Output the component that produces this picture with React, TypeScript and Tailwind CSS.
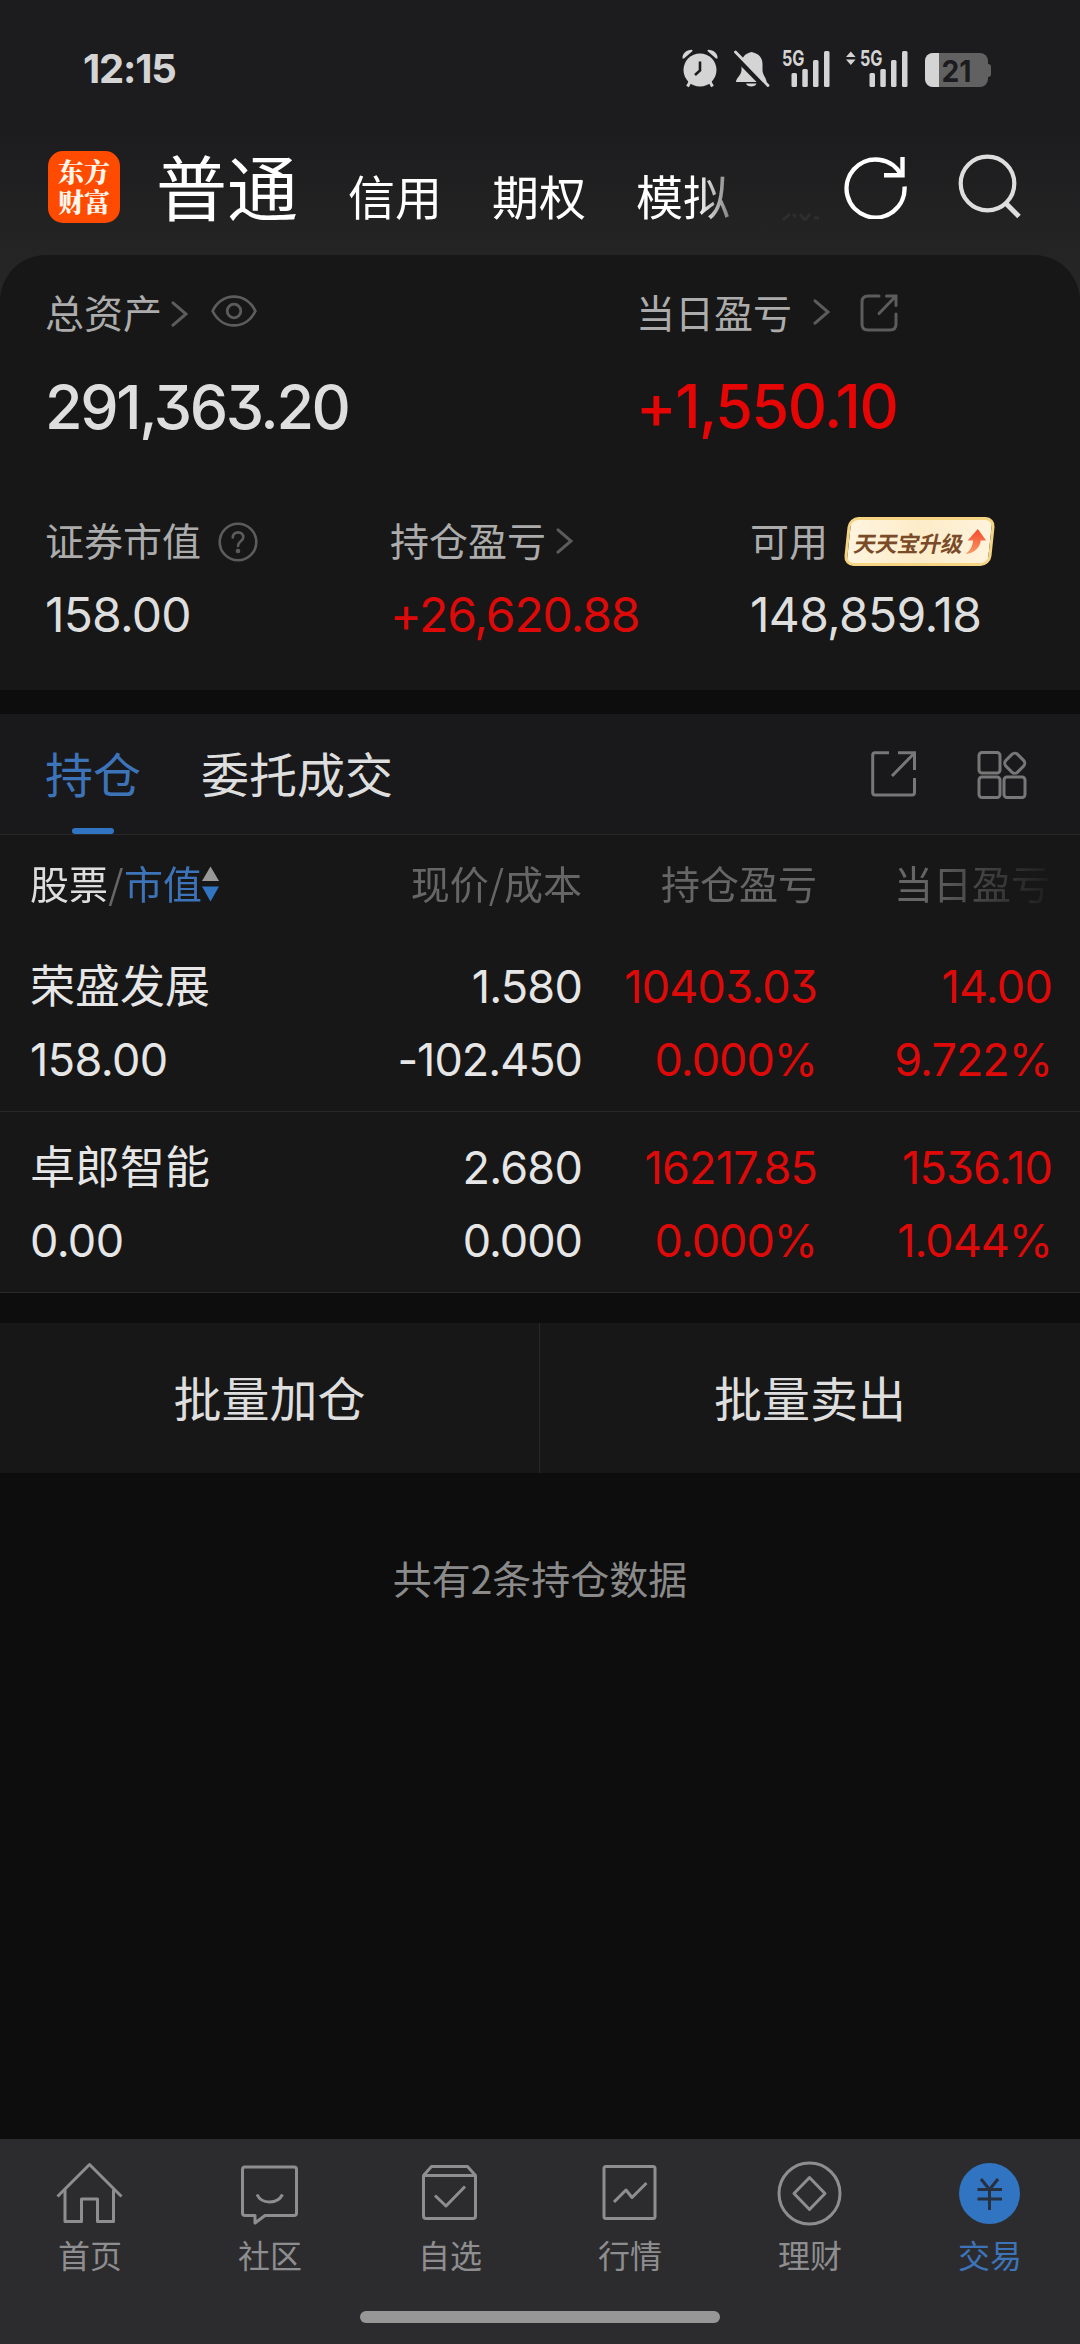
import type { ReactNode } from 'react';
import clsx from 'clsx';

interface Cell {
  top: string;
  bottom: string;
}

interface Holding {
  name: string;
  marketValue: string;
  price: Cell;
  profit: Cell;
  today: Cell;
}

const HOLDINGS: Holding[] = [
  {
    name: '荣盛发展',
    marketValue: '158.00',
    price: { top: '1.580', bottom: '-102.450' },
    profit: { top: '10403.03', bottom: '0.000%' },
    today: { top: '14.00', bottom: '9.722%' },
  },
  {
    name: '卓郎智能',
    marketValue: '0.00',
    price: { top: '2.680', bottom: '0.000' },
    profit: { top: '16217.85', bottom: '0.000%' },
    today: { top: '1536.10', bottom: '1.044%' },
  },
];

const NUM = "font-['Inter',sans-serif] [font-feature-settings:'cv09']";

/* ---------- Icons ---------- */

function AlarmIcon() {
  return (
    <svg width="38" height="40" viewBox="0 0 38 40" fill="none">
      <path d="M1.5 9.5C1 5 5 .8 11 .8L11.6 2 3 9.6Z" fill="#d4d4d4" />
      <path d="M36.500 9.500C37 5 33 .8 27 .8L26.400 2 35 9.600Z" fill="#d4d4d4" />
      <path d="M9 33 6.500 37.500M29 33 31.500 37.500" stroke="#d4d4d4" strokeWidth="3" />
      <circle cx="19" cy="21" r="16.500" fill="#d4d4d4" />
      <path d="M19 12.500V21.500L14 26" stroke="#1c1c1e" strokeWidth="2.600" />
    </svg>
  );
}

function BellOffIcon() {
  return (
    <svg width="37" height="37" viewBox="0 0 37 37" fill="none">
      <path
        d="M18.500 2C11.500 3.500 8.500 8 8.500 14V20C8.500 25 3 28 3 32H33.500C33.500 28 29.500 25 29.500 20V14C29.500 8 26 3.500 18.500 2Z"
        fill="#d4d4d4"
      />
      <path d="M13 33.500H23.500C22.500 37.500 14 37.500 13 33.500Z" fill="#d4d4d4" />
      <path d="M-1 3.500 33 38" stroke="#1c1c1e" strokeWidth="5" />
      <path d="M2.500 2 35 35.500" stroke="#d4d4d4" strokeWidth="2.800" strokeLinecap="round" />
    </svg>
  );
}

function SignalIcon({ traffic = false }: { traffic?: boolean }) {
  return (
    <svg className="overflow-visible" width={traffic ? 62 : 48} height="40" viewBox={traffic ? '-14 0 62 40' : '0 0 48 40'}>
      {traffic && <path d="M-14 8 -9.200 2.500-4.400 8ZM-14 10.500H-4.400L-9.200 16Z" fill="#d4d4d4" />}
      <text x="0" y="17" textLength="22.500" lengthAdjust="spacingAndGlyphs" fontFamily="Inter" fontSize="21.500" fontWeight="700" fill="#d4d4d4">
        5G
      </text>
      <rect x="9.500" y="24" width="5.500" height="14" rx="1.500" fill="#d4d4d4" />
      <rect x="20.300" y="20" width="5.500" height="18" rx="1.500" fill="#d4d4d4" />
      <rect x="31" y="11" width="5.500" height="27" rx="1.500" fill="#d4d4d4" />
      <rect x="42" y="2" width="5.500" height="36" rx="1.500" fill="#d4d4d4" />
    </svg>
  );
}

function BatteryIcon() {
  return (
    <svg width="66" height="34" viewBox="0 0 66 34">
      <rect x="0" y="0" width="63" height="34" rx="8" fill="#616161" />
      <rect x="60" y="11" width="6" height="13" rx="3" fill="#616161" />
      <path d="M8 0H14V34H8A8 8 0 0 1 0 26V8A8 8 0 0 1 8 0Z" fill="#d4d4d4" />
      <text x="16.500" y="28.500" textLength="30" lengthAdjust="spacingAndGlyphs" fontFamily="Inter" fontSize="30" fontWeight="700" fill="#1c1c1e">
        21
      </text>
    </svg>
  );
}

function RefreshIcon() {
  return (
    <svg width="64" height="64" viewBox="0 0 64 64" fill="none" stroke="#fff" strokeWidth="4.400">
      <path d="M60.500 31.500A29 29 0 1 1 57.500 20.500" />
      <path d="M58.500 2V20.300H40" />
    </svg>
  );
}

function SearchIcon() {
  return (
    <svg width="64" height="66" viewBox="0 0 64 66" fill="none" stroke="#dedede" strokeWidth="4.200">
      <circle cx="29.500" cy="29.500" r="26.800" />
      <path d="M47.500 49 61 62.500" strokeWidth="5" />
    </svg>
  );
}

function Chevron({ className }: { className?: string }) {
  return (
    <svg className={className} width="17" height="26" viewBox="0 0 17 26" fill="none" stroke="#5c5c5c" strokeWidth="3" strokeLinecap="round">
      <path d="M2 1.800 15 13 2 24.200" />
    </svg>
  );
}

function EyeIcon() {
  return (
    <svg className="ml-[23px]" width="46" height="32" viewBox="0 0 46 32" fill="none" stroke="#5c5c5c" strokeWidth="2.800">
      <path d="M1.600 16C6 7 14 1.600 23 1.600S40 7 44.400 16C40 25 32 30.400 23 30.400S6 25 1.600 16Z" />
      <circle cx="23" cy="16" r="6.800" />
    </svg>
  );
}

function HelpIcon() {
  return (
    <svg className="mt-[5px] ml-[17px]" width="40" height="40" viewBox="0 0 40 40" fill="none" stroke="#5c5c5c" strokeWidth="2.600">
      <circle cx="20" cy="20" r="18.300" />
      <path d="M14.800 15.500C15 8.500 25.300 8.800 25.300 15.200C25.300 19 20 19 20 24" strokeLinecap="round" />
      <circle cx="20" cy="29" r="1" fill="#5c5c5c" />
    </svg>
  );
}

function ShareRoundIcon() {
  return (
    <svg className="mt-[3px] ml-[29px]" width="40" height="40" viewBox="0 0 40 40" fill="none" stroke="#5c5c5c" strokeWidth="3" strokeLinecap="round">
      <path d="M20 3H9Q3 3 3 9V31Q3 37 9 37H31Q37 37 37 31V21" />
      <path d="M27.500 3H37V12.500M36.500 3.500 20 20.500" />
    </svg>
  );
}

function ShareSquareIcon() {
  return (
    <svg width="48" height="48" viewBox="0 0 48 48" fill="none" stroke="#777" strokeWidth="3">
      <path d="M19 2.700H5Q2.700 2.700 2.700 5V42.500Q2.700 45 5 45H42Q44.500 45 44.500 42.500V28" />
      <path d="M28 2.700H44.500V20M44 3.500 22 26" />
    </svg>
  );
}

function GridIcon() {
  return (
    <svg width="50" height="50" viewBox="0 0 50 50" fill="none" stroke="#777" strokeWidth="3">
      <rect x="2" y="2.500" width="21" height="20.500" rx="3" />
      <rect x="2" y="27" width="21" height="20.500" rx="3" />
      <rect x="27" y="27" width="21" height="20.500" rx="3" />
      <rect x="29.500" y="5" width="16.500" height="16.500" rx="4" transform="rotate(45 37.750 13.250)" />
    </svg>
  );
}

function SortIcon() {
  return (
    <svg className="mt-[4px]" width="17" height="36" viewBox="0 0 17 36">
      <path d="M0 15 8.500 .5 17 15Z" fill="#999" />
      <path d="M0 20.500H17L8.500 35.500Z" fill="#3174c1" />
    </svg>
  );
}

function UpgradeBadge() {
  return (
    <div className="mt-[5px] ml-[18px] flex h-[49px] w-[147px] -skew-x-6 items-center rounded-[10px] border-[3px] border-[#f5d484] bg-linear-to-r from-[#fff4df] via-[#fdecc8] to-[#fff3dc] pl-[6px]">
      <span className="-skew-x-6 text-[22px] leading-none font-bold tracking-[-0.3px] whitespace-nowrap text-[#7a4b28]">天天宝升级</span>
      <svg className="ml-[3px]" width="19" height="25" viewBox="0 0 19 25">
        <defs>
          <linearGradient id="rise" x1="0" y1="0" x2="0" y2="1">
            <stop offset="0" stopColor="#f5482f" />
            <stop offset="1" stopColor="#f79a62" />
          </linearGradient>
        </defs>
        <path d="M9.500 0 19 11.500H13.500C14 18 9 24 0 25C4.500 21 6 17 6 11.500H.5Z" fill="url(#rise)" />
      </svg>
    </div>
  );
}

/* ---------- Header ---------- */

function StatusBar() {
  return (
    <div className="flex h-[137px] items-center pl-[83px]">
      <span className={clsx(NUM, 'w-[598px] text-[40px] font-bold tracking-[-1.2px] text-[#d4d4d4]')}>12:15</span>
      <div className="flex items-center">
        <AlarmIcon />
        <div className="ml-[14px]">
          <BellOffIcon />
        </div>
        <div className="ml-[12px]">
          <SignalIcon />
        </div>
        <div className="ml-[16px]">
          <SignalIcon traffic />
        </div>
        <div className="mt-[3px] ml-[17px]">
          <BatteryIcon />
        </div>
      </div>
    </div>
  );
}

function AccountTabs() {
  return (
    <div className="flex h-[118px] items-start pl-[48px]">
      <div className="mt-[14px] h-[72px] w-[72px] rounded-[15px] bg-[#ff4b00] pt-[5px] text-center font-['Noto_Serif_CJK_SC','Noto_Sans_CJK_SC',sans-serif] text-[26px] leading-[30px] font-black text-[#fff6ec]">
        东方
        <br />
        财富
      </div>
      <div className="-mt-[8px] ml-[36px] flex h-[120px] w-[586px] items-baseline overflow-hidden whitespace-nowrap text-white [mask-image:linear-gradient(to_right,#000_540px,transparent_600px)]">
        <span className="mt-[17px] text-[71px] leading-[76px]">普通</span>
        <span className="ml-[50px] text-[47px]">信用</span>
        <span className="ml-[50px] text-[47px]">期权</span>
        <span className="ml-[50px] text-[47px]">模拟</span>
      </div>
      <svg className="mt-[76px] ml-[40px]" width="38" height="8" viewBox="0 0 38 8" fill="none" stroke="#2e2e2e" strokeWidth="3">
        <path d="M1 7 8 1M11 1 14 4M18 1 23 7 28 1M32 5H37" />
      </svg>
      <div className="mt-[18px] ml-[24px]">
        <RefreshIcon />
      </div>
      <div className="mt-[17px] ml-[50px]">
        <SearchIcon />
      </div>
    </div>
  );
}

/* ---------- Assets ---------- */

function Label({ text, children }: { text: string; children?: ReactNode }) {
  return (
    <div className="flex h-[60px] items-center">
      <span className="text-[39px] leading-[60px] whitespace-nowrap text-[#acacac]">{text}</span>
      {children}
    </div>
  );
}

function AssetCard() {
  return (
    <section className="h-[435px] rounded-t-[46px] bg-[#171717] pt-[26px] pl-[45px]">
      <div className="grid grid-cols-[591px_1fr]">
        <Label text="总资产">
          <Chevron className="mt-[6px] ml-[9px]" />
          <EyeIcon />
        </Label>
        <Label text="当日盈亏">
          <Chevron className="mt-[2px] ml-[21px]" />
          <ShareRoundIcon />
        </Label>
        <p className={clsx(NUM, 'mt-[36px] text-[61px] leading-[60px] font-medium tracking-[-2.4px] text-[#dedede]')}>291,363.20</p>
        <p className={clsx(NUM, 'mt-[35px] text-[61px] leading-[60px] font-medium tracking-[-1.5px] text-[#e60505]')}>+1,550.10</p>
      </div>
      <div className="mt-[72px] grid grid-cols-[345px_360px_1fr]">
        <Label text="证券市值">
          <HelpIcon />
        </Label>
        <Label text="持仓盈亏">
          <Chevron className="mt-[4px] ml-[10px]" />
        </Label>
        <Label text="可用">
          <UpgradeBadge />
        </Label>
        <p className={clsx(NUM, 'mt-[16px] text-[48px] leading-[60px] tracking-[-0.8px] text-[#dedede]')}>158.00</p>
        <p className={clsx(NUM, 'mt-[16px] text-[48px] leading-[60px] tracking-[-1.1px] text-[#de0a0a]')}>+26,620.88</p>
        <p className={clsx(NUM, 'mt-[16px] text-[48px] leading-[60px] tracking-[-0.7px] text-[#dedede]')}>148,859.18</p>
      </div>
    </section>
  );
}

/* ---------- Holdings ---------- */

function HoldingTabs() {
  return (
    <div className="flex h-[121px] border-b border-[#282828] bg-[#19191b] pl-[45px]">
      <div className="flex flex-col items-center">
        <span className="mt-[28px] h-[60px] text-[48px] leading-[60px] text-[#3d74b9]">持仓</span>
        <span className="mt-[26px] h-[6px] w-[42px] rounded-full bg-[#3174c1]" />
      </div>
      <span className="mt-[28px] ml-[60px] text-[48px] leading-[60px] text-[#dedede]">委托成交</span>
      <div className="mt-[36px] mr-[53px] ml-auto flex gap-[59px]">
        <ShareSquareIcon />
        <GridIcon />
      </div>
    </div>
  );
}

const COLS = 'grid grid-cols-[370px_182px_235px_235px] pl-[30px]';

function TableHeader() {
  return (
    <div className={clsx(COLS, 'h-[96px] pt-[17px] text-[39px] leading-[60px] whitespace-nowrap text-[#666] [mask-image:linear-gradient(to_right,#000_920px,transparent_1062px)]')}>
      <div className="flex h-[60px] items-center">
        <span className="text-[#dedede]">股票</span>
        <span className="w-[16px] text-center">/</span>
        <span className="text-[#3d74b9]">市值</span>
        <SortIcon />
      </div>
      <span className="text-right">现价/成本</span>
      <span className="text-right">持仓盈亏</span>
      <span className="pr-[2px] text-right">当日盈亏</span>
    </div>
  );
}

function NumberCell({ cell, className }: { cell: Cell; className: string }) {
  return (
    <div className={clsx(NUM, 'flex flex-col items-end text-[45px] leading-[73px] tracking-[-0.8px] whitespace-nowrap', className)}>
      <span>{cell.top}</span>
      <span className="tracking-[-1px]">{cell.bottom}</span>
    </div>
  );
}

function HoldingRow({ item }: { item: Holding }) {
  return (
    <div className={clsx(COLS, 'h-[181px] border-b border-[#282828] pt-[19px]')}>
      <div className="flex flex-col text-[45px] leading-[73px] text-[#e6e6e6]">
        <span className="-mt-[3px] mb-[3px]">{item.name}</span>
        <span className={clsx(NUM, 'tracking-[-0.6px]')}>{item.marketValue}</span>
      </div>
      <NumberCell cell={item.price} className="text-[#e6e6e6]" />
      <NumberCell cell={item.profit} className="text-[#de0a0a]" />
      <NumberCell cell={item.today} className="text-[#de0a0a]" />
    </div>
  );
}

function BatchActions() {
  return (
    <div className="mt-[30px] grid h-[150px] grid-cols-2 bg-[#171717] text-center text-[48px] leading-[147px] text-[#dedede]">
      <span className="border-r border-[#282828]">批量加仓</span>
      <span>批量卖出</span>
    </div>
  );
}

/* ---------- Bottom navigation ---------- */

const NAV_ITEMS: { label: string; icon: ReactNode }[] = [
  {
    label: '首页',
    icon: (
      <>
        <path d="M2.500 36.500 34.500 4.500 66.500 36.500" />
        <path d="M10 29.500V61.500H26.500V39H42.500V61.500H58.500V29.500" />
      </>
    ),
  },
  {
    label: '社区',
    icon: (
      <>
        <path d="M9 7H59Q61.500 7 61.500 9.500V53Q61.500 55.500 59 55.500H30L20 63V55.500H10Q7.500 55.500 7.500 53V9.500Q7.500 7 10 7" />
        <path d="M22 34.500C26.500 44.500 42.500 44.500 47.500 34.500" />
      </>
    ),
  },
  {
    label: '自选',
    icon: (
      <>
        <path d="M8.500 15.500H60.500V56Q60.500 58.500 58 58.500H11Q8.500 58.500 8.500 56ZM8.500 15.500 16.500 6.500H52.500L60.500 15.500" />
        <path d="M20 35.500 31 46 50 26.500" />
      </>
    ),
  },
  {
    label: '行情',
    icon: (
      <>
        <rect x="9" y="6.500" width="51" height="52" rx="2" />
        <path d="M19 42 31 30 37 37.500 51.500 23" />
      </>
    ),
  },
  {
    label: '理财',
    icon: (
      <>
        <circle cx="34.500" cy="33.500" r="30.500" />
        <path d="M34.500 17.500 50 33.500 34.500 49.500 19 33.500Z" />
      </>
    ),
  },
  {
    label: '交易',
    icon: (
      <>
        <circle cx="34.500" cy="33.500" r="30.500" fill="#3174c1" stroke="none" />
        <path d="M26 19 34.500 29.500 43 19M22.500 29.500H47M22.500 39H47M34.500 29.500V50" stroke="#26303f" strokeWidth="3" />
      </>
    ),
  },
];

function BottomNav() {
  return (
    <nav className="mt-auto h-[205px] bg-[#2c2c2e]">
      <div className="grid grid-cols-6 pt-[21px]">
        {NAV_ITEMS.map(({ label, icon }) => (
          <div key={label} className={clsx('flex flex-col items-center', label === '交易' ? 'text-[#3d74b9]' : 'text-[#8e8e90]')}>
            <svg className="mr-[2px]" width="69" height="68" viewBox="0 0 69 68" fill="none" stroke="#8e8e90" strokeWidth="3" strokeLinejoin="round">
              {icon}
            </svg>
            <span className="mt-[2px] text-[32px] leading-[48px]">{label}</span>
          </div>
        ))}
      </div>
      <div className="mx-auto mt-[33px] h-[12px] w-[360px] rounded-full bg-[#979797]" />
    </nav>
  );
}

export default function App() {
  return (
    <div className="flex h-[2344px] w-[1080px] flex-col overflow-hidden bg-[#0d0d0d] font-['Noto_Sans_CJK_SC',sans-serif]">
      <div className="bg-linear-to-b from-[#1c1c1e] from-40% to-[#282828] to-100% bg-[length:100%_310px] bg-no-repeat">
        <StatusBar />
        <AccountTabs />
        <AssetCard />
      </div>

      <main className="mt-[24px]">
        <HoldingTabs />
        <div className="bg-[#171717]">
          <TableHeader />
          {HOLDINGS.map((item) => (
            <HoldingRow key={item.name} item={item} />
          ))}
        </div>
        <BatchActions />
        <p className="mt-[74px] text-center text-[39px] leading-[60px] text-[#8a8a8a]">共有2条持仓数据</p>
      </main>

      <BottomNav />
    </div>
  );
}
